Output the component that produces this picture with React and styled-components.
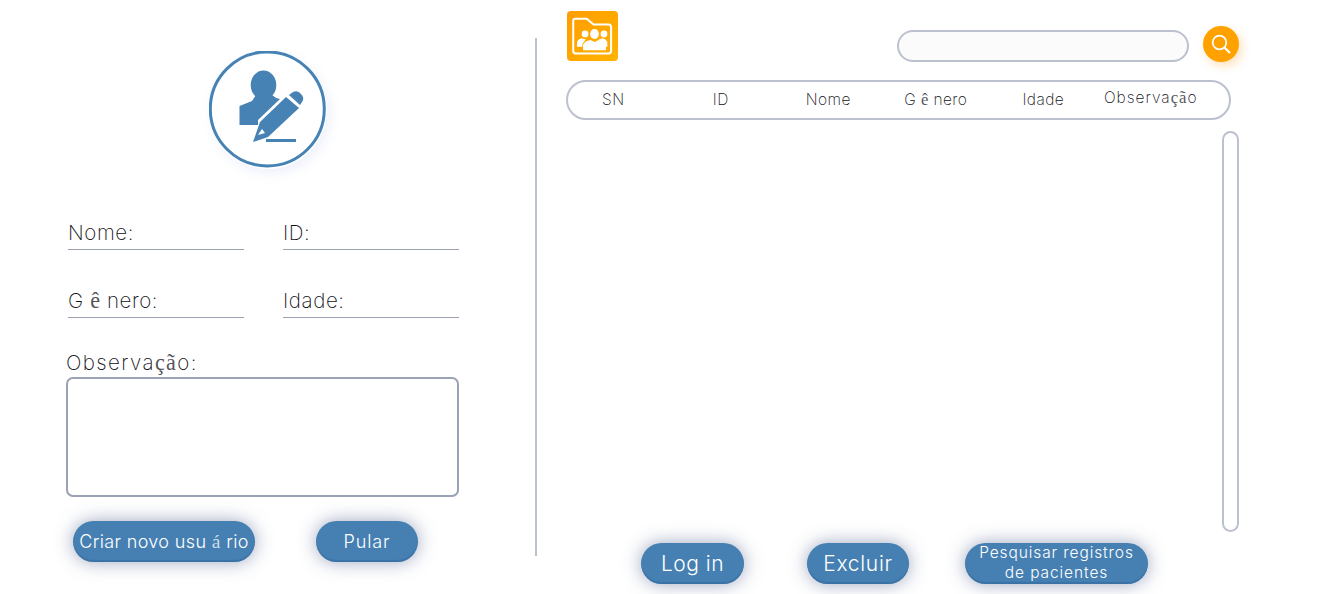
import React from "react";
import styled, { createGlobalStyle } from "styled-components";

const GlobalStyle = createGlobalStyle`
  html, body {
    margin: 0;
    padding: 0;
    background: #fff;
  }
  body {
    font-family: "Inter", "Liberation Sans", sans-serif;
    font-weight: 250;
    color: #111116;
  }
`;

const Page = styled.div`
  display: flex;
  width: 1322px;
  height: 594px;
  overflow: hidden;
`;

const LeftPanel = styled.section`
  width: 535px;
  flex: none;
  padding: 51px 0 0 66px;
  box-sizing: border-box;
`;

const Avatar = styled.div`
  width: 118px;
  height: 118px;
  margin-left: 143px;
  border-radius: 50%;
  box-shadow: 3px 4px 12px rgba(170, 180, 235, 0.2);
  svg {
    display: block;
  }
`;

const FieldRow = styled.div`
  display: flex;
  gap: 39px;
  padding-left: 2px;
  margin-top: ${(p) => p.$top}px;
`;

const Field = styled.div`
  width: 176px;
  height: 30px;
  box-sizing: border-box;
  border-bottom: 1.5px solid #9ba1b0;
  font-size: 20.5px;
  line-height: 25px;
  letter-spacing: 0.6px;
  white-space: nowrap;
`;

const NoteLabel = styled.div`
  margin-top: 32px;
  height: 27px;
  font-size: 20.5px;
  line-height: 26px;
  letter-spacing: 1.4px;
`;

const NoteBox = styled.div`
  width: 393px;
  height: 120px;
  box-sizing: border-box;
  border: 2px solid #9aa2b5;
  border-radius: 7px;
`;

const LeftActions = styled.div`
  display: flex;
  margin-top: 24px;
  padding-left: 7px;
`;

const PillButton = styled.button`
  width: ${(p) => p.$width}px;
  height: 41px;
  margin-left: ${(p) => p.$gap || 0}px;
  padding: 0 0 ${(p) => p.$lift || 0}px;
  flex: none;
  border: none;
  border-radius: 21px;
  background: #4680b3;
  color: #fff;
  font-family: "Inter", "Liberation Sans", sans-serif;
  font-weight: 300;
  font-size: ${(p) => p.$size}px;
  line-height: ${(p) => p.$line || 37}px;
  letter-spacing: ${(p) => p.$spacing || 0.5}px;
  white-space: nowrap;
  box-shadow: inset 0 -2px 1px rgba(40, 90, 140, 0.35),
    0 0 18px rgba(60, 80, 130, 0.5);
`;

const Divider = styled.div`
  width: 2px;
  height: 518px;
  margin-top: 38px;
  flex: none;
  background: #bcc1ce;
`;

const RightPanel = styled.section`
  width: 673px;
  margin-left: 29px;
  flex: none;
  padding-top: 11px;
  display: flex;
  flex-direction: column;
`;

const TopRow = styled.div`
  display: flex;
  justify-content: space-between;
  height: 50px;
  padding-left: 1px;
`;

const Logo = styled.div`
  width: 51px;
  height: 50px;
  border-radius: 4px;
  background: linear-gradient(135deg, #ff9d00, #ffb300);
  svg {
    display: block;
  }
`;

const SearchGroup = styled.div`
  display: flex;
  gap: 14px;
  margin-top: 15px;
  height: 36px;
  align-items: flex-end;
`;

const SearchInput = styled.div`
  width: 292px;
  height: 32px;
  box-sizing: border-box;
  border: 2px solid #bcc1d0;
  border-radius: 16px;
  background: #fbfbfb;
`;

const SearchButton = styled.div`
  width: 36px;
  height: 36px;
  border-radius: 50%;
  background: #ffa200;
  display: flex;
  align-items: center;
  justify-content: center;
  box-shadow: 3px 4px 10px rgba(255, 170, 60, 0.35);
`;

const TableHeader = styled.div`
  width: 665px;
  height: 40px;
  margin-top: 19px;
  box-sizing: border-box;
  border: 2.5px solid #bcc1d0;
  border-radius: 20px;
  padding-right: 33px;
  display: grid;
  grid-template-columns: repeat(6, 107.5px);
  justify-content: center;
  align-items: center;
`;

const HeaderCell = styled.div`
  text-align: center;
  font-size: 15.5px;
  letter-spacing: ${(p) => (p.$raised ? 1 : 0.4)}px;
  white-space: nowrap;
  padding-bottom: ${(p) => (p.$raised ? 4 : 1)}px;
`;

const ScrollTrack = styled.div`
  align-self: flex-end;
  width: 17px;
  height: 401px;
  margin-top: 11px;
  box-sizing: border-box;
  border: 2.5px solid #bcc1d0;
  border-radius: 9px;
`;

const BottomActions = styled.div`
  display: flex;
  margin-top: 11px;
  padding-left: 75px;
`;

const Alt = styled.span`
  font-family: "Liberation Serif", serif;
  font-weight: 400;
  font-size: 1.08em;
  opacity: 0.72;
`;

const AvatarIcon = () => (
  <svg width="118" height="118" viewBox="19 21 118 118">
    <circle cx="77.3" cy="78.9" r="57" fill="none" stroke="#4682b4" strokeWidth="3" />
    <ellipse cx="73.5" cy="55" rx="12.8" ry="14.6" fill="#4682b4" />
    <path
      d="M49.5 76 L62 71 L66 65 L82 65 Q85 68 90 69 L68 90 L68 95 L49.5 95 Z"
      fill="#4682b4"
    />
    <path d="M70 92 L96 67 L109 78 L78 107 L63 112 Z" fill="#4682b4" />
    <path d="M68 105 L72 99 L75 103 Z" fill="#fff" />
    <path d="M99 65 L103 62 Q108 60 111 64 Q115 68 112 72 L110 75 Z" fill="#4682b4" />
    <rect x="76" y="109" width="30" height="3" fill="#4682b4" />
  </svg>
);

const FolderIcon = () => (
  <svg width="51" height="50" viewBox="37 32 150 148">
    <path
      d="M55 150 V62 Q55 55 62 55 H95 L115 72 H160 Q167 72 167 80 V150 Q167 158 160 158 H62 Q55 158 55 150 Z"
      fill="none"
      stroke="#fff"
      strokeWidth="6"
    />
    <circle cx="90" cy="100" r="10" fill="#fff" />
    <circle cx="146" cy="100" r="10" fill="#fff" />
    <path d="M66 138 V126 Q68 116 80 113 L92 116 L82 130 V138 Z" fill="#fff" />
    <path d="M156 138 V126 Q154 116 142 113 L130 116 L140 130 V138 Z" fill="#fff" />
    <ellipse cx="118" cy="100" rx="13" ry="15" fill="#fff" />
    <path d="M84 148 V132 Q88 122 106 118 L118 124 L130 118 Q148 122 152 132 V148 Z" fill="#fff" />
  </svg>
);

const SearchIcon = () => (
  <svg width="20" height="20" viewBox="0 0 20 20" fill="none" stroke="#fff" strokeWidth="1.7">
    <circle cx="8.5" cy="8.5" r="6.8" />
    <path d="M13.5 13.5 L19 19" strokeWidth="2.2" />
  </svg>
);

const Genero = () => (
  <>
    G <Alt>ê</Alt> nero
  </>
);

const Observacao = () => (
  <>
    Observa<Alt>çã</Alt>o
  </>
);

const App = () => (
  <Page>
    <GlobalStyle />
    <LeftPanel>
      <Avatar>
        <AvatarIcon />
      </Avatar>
      <FieldRow $top={51}>
        <Field>Nome:</Field>
        <Field>ID:</Field>
      </FieldRow>
      <FieldRow $top={38}>
        <Field>
          <Genero />:
        </Field>
        <Field>Idade:</Field>
      </FieldRow>
      <NoteLabel>
        <Observacao />:
      </NoteLabel>
      <NoteBox />
      <LeftActions>
        <PillButton $width={182} $size={18} $spacing={0.35}>
          Criar novo usu <Alt>á</Alt> rio
        </PillButton>
        <PillButton $width={102} $gap={61} $size={18} $spacing={0.9}>
          Pular
        </PillButton>
      </LeftActions>
    </LeftPanel>
    <Divider />
    <RightPanel>
      <TopRow>
        <Logo>
          <FolderIcon />
        </Logo>
        <SearchGroup>
          <SearchInput />
          <SearchButton>
            <SearchIcon />
          </SearchButton>
        </SearchGroup>
      </TopRow>
      <TableHeader>
        <HeaderCell>SN</HeaderCell>
        <HeaderCell>ID</HeaderCell>
        <HeaderCell>Nome</HeaderCell>
        <HeaderCell>
          <Genero />
        </HeaderCell>
        <HeaderCell>Idade</HeaderCell>
        <HeaderCell $raised>
          <Observacao />
        </HeaderCell>
      </TableHeader>
      <ScrollTrack />
      <BottomActions>
        <PillButton $width={103} $size={21}>
          Log in
        </PillButton>
        <PillButton $width={102} $gap={63} $size={21} $spacing={0.7}>
          Excluir
        </PillButton>
        <PillButton $width={183} $gap={56} $size={15.5} $line={20} $lift={4} $spacing={0.9}>
          Pesquisar registros
          <br />
          de pacientes
        </PillButton>
      </BottomActions>
    </RightPanel>
  </Page>
);

export default App;
